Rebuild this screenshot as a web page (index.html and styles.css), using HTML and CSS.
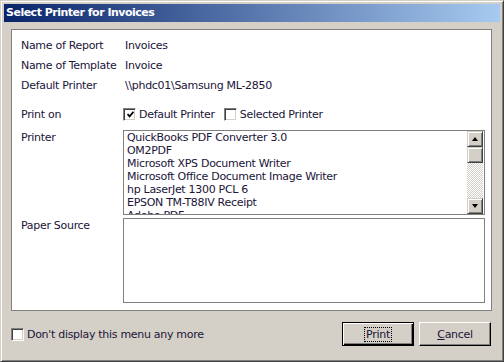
FILE: index.html
```html
<!DOCTYPE html>
<html lang="en">
<head>
    <meta charset="UTF-8">
    <title>Select Printer for Invoices</title>
    <link rel="stylesheet" href="styles.css">
</head>
<body>
    <div class="window">
        <div class="titlebar">Select Printer for Invoices</div>
        <div class="client">
            <div class="panel">
                <div class="row">
                    <span class="label">Name of Report</span>
                    <span class="value">Invoices</span>
                </div>
                <div class="row">
                    <span class="label">Name of Template</span>
                    <span class="value">Invoice</span>
                </div>
                <div class="row">
                    <span class="label">Default Printer</span>
                    <span class="value">\\phdc01\Samsung ML-2850</span>
                </div>
                <div class="row print-on">
                    <span class="label">Print on</span>
                    <label class="check">
                        <span class="box">
                            <svg width="7" height="7" viewBox="0 0 7 7"><polyline points="0.5,3 2.6,5.4 6.5,0.8" fill="none" stroke="#000" stroke-width="1.7"/></svg>
                        </span>
                        Default Printer
                    </label>
                    <label class="check">
                        <span class="box"></span>
                        Selected Printer
                    </label>
                </div>
                <div class="row list-row">
                    <span class="label">Printer</span>
                    <div class="listbox">
                        <div class="items">
                            <div>QuickBooks PDF Converter 3.0</div>
                            <div>OM2PDF</div>
                            <div>Microsoft XPS Document Writer</div>
                            <div>Microsoft Office Document Image Writer</div>
                            <div>hp LaserJet 1300 PCL 6</div>
                            <div>EPSON TM-T88IV Receipt</div>
                            <div>Adobe PDF</div>
                        </div>
                        <div class="scrollbar">
                            <div class="sb-btn"><span class="arrow up"></span></div>
                            <div class="sb-thumb"></div>
                            <div class="sb-track"></div>
                            <div class="sb-btn"><span class="arrow down"></span></div>
                        </div>
                    </div>
                </div>
                <div class="row list-row paper">
                    <span class="label">Paper Source</span>
                    <div class="listbox"></div>
                </div>
            </div>
            <div class="footer">
                <label class="check">
                    <span class="box"></span>
                    Don't display this menu any more
                </label>
                <div class="buttons">
                    <button class="btn default"><span class="focus">Print</span></button>
                    <button class="btn"><u>C</u>ancel</button>
                </div>
            </div>
        </div>
    </div>
</body>
</html>
```

FILE: styles.css
```css
body {
    margin: 0;
    padding: 0;
    font-family: 'DejaVu Sans', sans-serif;
    font-size: 11px;
    letter-spacing: -0.3px;
    color: #201438;
}

.window {
    box-sizing: border-box;
    width: 504px;
    height: 362px;
    background: #d4d0c8;
    border: 1px solid;
    border-color: #d4d0c8 #404040 #404040 #d4d0c8;
    box-shadow: inset 1px 1px #fff, inset -1px -1px #808080;
    padding: 3px;
    display: flex;
    flex-direction: column;
}

.titlebar {
    height: 18px;
    line-height: 18px;
    padding-left: 2px;
    background: linear-gradient(to right, #0a246a, #a6caf0);
    color: #fff;
    font-weight: bold;
    letter-spacing: -0.5px;
}

.client {
    padding: 7px 8px 0 7px;
}

.panel {
    box-sizing: border-box;
    height: 282px;
    background: #fff;
    border: 1px solid #808080;
    padding: 5px 6px 0 9px;
}

.row {
    display: flex;
    align-items: center;
    height: 20px;
}

.label {
    width: 102px;
    flex-shrink: 0;
}

.value {
    padding-left: 2px;
}

.print-on {
    margin-top: 9px;
}

.check {
    display: flex;
    align-items: center;
    gap: 3px;
    margin-right: 9px;
}

.box {
    box-sizing: border-box;
    width: 13px;
    height: 13px;
    background: #fff;
    border: 1px solid;
    border-color: #808080 #fff #fff #808080;
    box-shadow: inset 1px 1px #404040, inset -1px -1px #d4d0c8;
    display: flex;
    align-items: center;
    justify-content: center;
}

.box svg {
    display: block;
    margin: 1px 0 0 1px;
}

.list-row {
    align-items: flex-start;
    height: 85px;
    margin-top: 6px;
}

.list-row .label {
    line-height: 13px;
    padding-top: 1px;
}

.paper {
    margin-top: 3px;
}

.listbox {
    box-sizing: border-box;
    flex: 1;
    height: 85px;
    border: 1px solid #808080;
    padding: 0 1px 0 0;
    display: flex;
    overflow: hidden;
}

.items {
    flex: 1;
    padding-left: 3px;
    line-height: 13px;
    white-space: nowrap;
    overflow: hidden;
}

.scrollbar {
    width: 16px;
    display: flex;
    flex-direction: column;
}

.sb-btn,
.sb-thumb {
    box-sizing: border-box;
    height: 16px;
    background: #d4d0c8;
    border: 1px solid;
    border-color: #d4d0c8 #404040 #404040 #d4d0c8;
    box-shadow: inset 1px 1px #fff, inset -1px -1px #808080;
    display: flex;
    align-items: center;
    justify-content: center;
}

.sb-track {
    flex: 1;
    background: repeating-conic-gradient(#d4d0c8 0 25%, #fff 0 50%) 0 0 / 2px 2px;
}

.arrow {
    width: 0;
    height: 0;
    border-left: 3.5px solid transparent;
    border-right: 3.5px solid transparent;
}

.arrow.up {
    border-bottom: 4px solid #000;
}

.arrow.down {
    border-top: 4px solid #000;
}

.footer {
    display: flex;
    align-items: center;
    justify-content: space-between;
    margin-top: 11px;
    height: 24px;
    padding-right: 1px;
}

.buttons {
    display: flex;
    gap: 5px;
}

.btn {
    box-sizing: border-box;
    width: 72px;
    height: 24px;
    font-family: inherit;
    font-size: 11px;
    letter-spacing: -0.3px;
    color: #201438;
    background: #d4d0c8;
    border: 1px solid;
    border-color: #fff #000 #000 #fff;
    box-shadow: inset -1px -1px #808080;
    padding: 0;
}

.btn.default {
    border: 1px solid #000;
    box-shadow: inset 1px 1px #fff, inset -1px -1px #000, inset -2px -2px #808080;
}

.focus {
    border: 1px dotted #000;
    padding: 0 1px;
}
```
